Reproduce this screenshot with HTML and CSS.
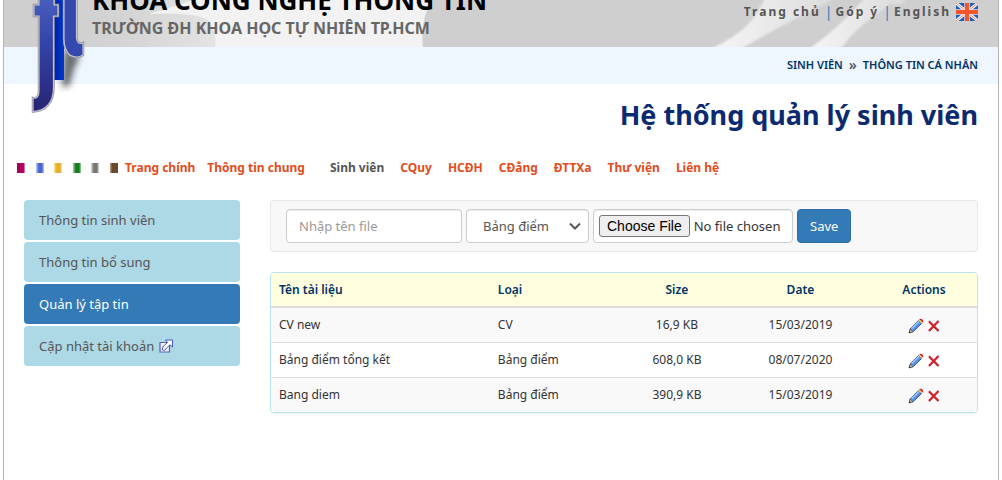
FILE: index.html
```html
<!DOCTYPE html>
<html lang="vi">
<head>
<meta charset="utf-8">
<meta name="viewport" content="width=device-width, initial-scale=1">
<title>Hệ thống quản lý sinh viên</title>
<link rel="stylesheet" href="styles.css">
</head>
<body>
<svg class="sprite" aria-hidden="true">
  <defs>
    <symbol id="icon-edit" viewBox="0 0 16 16">
      <path d="M1.5 14.5 2.3 10.8 10.6 2.3 13.7 5.3 5.2 13.6Z" fill="#5b93ee" stroke="#2c4c94"/>
      <path d="M3.6 10.6 11 3.2" stroke="#a9cbfb" stroke-width="1.4"/>
      <path d="M10.4 2.4 11.8 1.2 14.8 4.2 13.6 5.6Z" fill="#f6d35e"/>
      <path d="M11.8 1.1Q14.8.8 14.9 4.2Z" fill="#e01b1b" stroke="#e01b1b"/>
      <path d="M1 15 2.1 11 5 13.8Z" fill="#c9b9a0" stroke="#555" stroke-width=".7"/>
      <path d="M1 15 1.5 13.2 2.9 14.5Z" fill="#222"/>
    </symbol>
    <symbol id="icon-delete" viewBox="0 0 12 12">
      <path d="M1 1.5 10.5 11M10.5 1 1 11" stroke="#a8141e" stroke-width="2"/>
      <path d="M1 1 10.5 10.5M10.5 1 1 10.5" stroke="#e3262e" stroke-width="1.2"/>
    </symbol>
  </defs>
</svg>
<div class="page">
  <header class="banner">
    <svg class="banner-art" viewBox="0 0 994 47" preserveAspectRatio="none" aria-hidden="true">
      <defs>
        <linearGradient id="glow" x1="0" x2="1"><stop offset="0" stop-color="#cfcfcf"/><stop offset=".35" stop-color="#d4d4d4"/><stop offset="1" stop-color="#e6e6e6"/></linearGradient>
        <linearGradient id="swoosh" x1="0" x2="1"><stop offset="0" stop-color="#f6f6f6"/><stop offset="1" stop-color="#dadada"/></linearGradient>
        <filter id="haze"><feGaussianBlur stdDeviation="1"/></filter>
      </defs>
      <rect width="994" height="47" fill="#cfcfcf"/>
      <path d="M60 0H230V20Q222 34 211 47H60Z" fill="url(#glow)"/>
      <path d="M190 0H424Q425 8 421 16 417 30 419 47H211Q213 30 204 20 190 12 145 14Z" fill="#f2f2f2"/>
      <g filter="url(#haze)" fill="url(#swoosh)">
        <path d="M705 50Q742 32 752 14L762-3H835Q800 14 770 30L735 50Z"/>
        <path d="M804 50Q825 35 843 17L862-3H900Q904 7 886 4L868 18Q850 30 836 50Z"/>
      </g>
    </svg>
    <div class="brand">
      <p class="brand-name">KHOA CÔNG NGHỆ THÔNG TIN</p>
      <p class="brand-school">TRƯỜNG ĐH KHOA HỌC TỰ NHIÊN TP.HCM</p>
    </div>
    <nav class="top-links" aria-label="Liên kết">
      <a href="#">Trang chủ</a><span class="bar">|</span><a href="#">Góp ý</a><span class="bar">|</span><a href="#">English</a>
      <svg class="flag" viewBox="0 0 22 18" aria-hidden="true">
        <rect width="22" height="18" fill="#1761bd"/>
        <path d="M0 0 22 18M22 0 0 18" stroke="#f3f6fb" stroke-width="3"/>
        <path d="M0 0 22 18M22 0 0 18" stroke="#f08a72" stroke-width="1"/>
        <path d="M11 0V18M0 9H22" stroke="#fbd9cf" stroke-width="5.500"/>
        <path d="M11 0V18M0 9H22" stroke="#f4572c" stroke-width="4"/>
      </svg>
    </nav>
  </header>
  <svg class="logo" viewBox="0 0 60 116" role="img" aria-label="FIT">
    <defs>
      <linearGradient id="letter" x1="0" y1="0" x2="0" y2="1"><stop offset="0" stop-color="#4a5fbd"/><stop offset=".4" stop-color="#3344a8"/><stop offset="1" stop-color="#272474"/></linearGradient>
      <linearGradient id="stem" x1="0" y1="0" x2="1" y2="0"><stop offset="0" stop-color="#001fa0"/><stop offset="1" stop-color="#0038cc"/></linearGradient>
      <filter id="soft" x="-50%" y="-50%" width="200%" height="200%"><feGaussianBlur stdDeviation="3"/></filter>
    </defs>
    <path d="M34 48 50 57Q43 68 40 85L32 88Z" fill="#222" opacity=".65" filter="url(#soft)"/>
    <rect x="23" y="-2" width="11" height="82" fill="url(#stem)"/>
    <g stroke="#8c8c94" stroke-width="2.400">
      <path d="M9-3H24V5H28V16H23.500V84Q24 99 18 105 13 111 3 111.500V98Q9 99 9 91V16H4V5H9Z" fill="url(#letter)"/>
      <path d="M34-3H46.500V38Q47 45 53 43V55Q47 59 40 55 34 50 34 39Z" fill="#3548ad"/>
    </g>
    <g stroke="#c4c4ce" stroke-width="1.200">
      <path d="M9-3H24V5H28V16H23.500V84Q24 99 18 105 13 111 3 111.500V98Q9 99 9 91V16H4V5H9Z" fill="url(#letter)"/>
      <path d="M34-3H46.500V38Q47 45 53 43V55Q47 59 40 55 34 50 34 39Z" fill="#3548ad"/>
    </g>
  </svg>
  <div class="breadcrumb"><a href="#">SINH VIÊN</a><span class="sep">»</span><a href="#">THÔNG TIN CÁ NHÂN</a></div>
  <h1 class="title">Hệ thống quản lý sinh viên</h1>
  <nav class="menu" aria-label="Trình đơn chính">
    <span class="squares" aria-hidden="true"><i class="sq plum"></i><i class="sq blue"></i><i class="sq gold"></i><i class="sq green"></i><i class="sq gray"></i><i class="sq brown"></i></span>
    <a class="first" href="#">Trang chính</a>
    <a class="wide" href="#">Thông tin chung</a>
    <a class="current" href="#">Sinh viên</a>
    <a href="#">CQuy</a>
    <a href="#">HCĐH</a>
    <a href="#">CĐẳng</a>
    <a href="#">ĐTTXa</a>
    <a href="#">Thư viện</a>
    <a href="#">Liên hệ</a>
  </nav>
  <div class="content">
    <nav class="side" aria-label="Sinh viên">
      <a href="#">Thông tin sinh viên</a>
      <a href="#">Thông tin bổ sung</a>
      <a class="active" href="#" aria-current="page">Quản lý tập tin</a>
      <a href="#">Cập nhật tài khoản
        <svg class="external" viewBox="0 0 14 14" aria-hidden="true">
          <path d="M1 3.500H10.500V13H1Z" fill="#eef1fc" stroke="#5961b0" stroke-width="1.200"/>
          <path d="M3 10.500 4.500 7 8.500 3.500 6.500 1H13.500V8L11 5.800 7.500 9 5.500 11.500Z" fill="#fff" stroke="#4a55b8"/>
        </svg>
      </a>
    </nav>
    <main class="main">
      <form class="upload">
        <input class="field name" type="text" placeholder="Nhập tên file" aria-label="Nhập tên file">
        <div class="kind-box">
          <select class="field kind" aria-label="Loại"><option>Bảng điểm</option><option>CV</option></select>
          <svg class="chevron" viewBox="0 0 12 8" aria-hidden="true"><path d="M1 1.500 6 6.500 11 1.500" fill="none" stroke="#555" stroke-width="2"/></svg>
        </div>
        <input class="field file" type="file" aria-label="Tập tin">
        <button class="save" type="button">Save</button>
      </form>
      <div class="panel">
        <table class="files">
          <colgroup><col class="c-name"><col class="c-kind"><col class="c-size"><col class="c-date"><col class="c-act"></colgroup>
          <thead><tr><th>Tên tài liệu</th><th>Loại</th><th class="mid">Size</th><th class="mid">Date</th><th class="mid">Actions</th></tr></thead>
          <tbody>
            <tr><td>CV new</td><td>CV</td><td class="mid">16,9 KB</td><td class="mid">15/03/2019</td><td><div class="actions"><button type="button" aria-label="Sửa"><svg class="edit"><use href="#icon-edit"/></svg></button><button type="button" aria-label="Xóa"><svg class="delete"><use href="#icon-delete"/></svg></button></div></td></tr>
            <tr><td>Bảng điểm tổng kết</td><td>Bảng điểm</td><td class="mid">608,0 KB</td><td class="mid">08/07/2020</td><td><div class="actions"><button type="button" aria-label="Sửa"><svg class="edit"><use href="#icon-edit"/></svg></button><button type="button" aria-label="Xóa"><svg class="delete"><use href="#icon-delete"/></svg></button></div></td></tr>
            <tr><td>Bang diem</td><td>Bảng điểm</td><td class="mid">390,9 KB</td><td class="mid">15/03/2019</td><td><div class="actions"><button type="button" aria-label="Sửa"><svg class="edit"><use href="#icon-edit"/></svg></button><button type="button" aria-label="Xóa"><svg class="delete"><use href="#icon-delete"/></svg></button></div></td></tr>
          </tbody>
        </table>
      </div>
    </main>
  </div>
</div>
</body>
</html>
```
FILE: styles.css
```css
* { box-sizing: border-box; }
body { margin: 0; background: #fff; color: #333; font-family: "Noto Sans", "Open Sans", sans-serif; font-size: 13px; line-height: 20px; }
a { color: inherit; text-decoration: none; }
.sprite { position: absolute; width: 0; height: 0; }

.page { position: relative; min-height: 100vh; margin: 0 3px; border: solid #b5b5b5; border-width: 0 1px; }

.banner { position: relative; display: flex; align-items: flex-end; justify-content: space-between; height: 47px; padding: 0 20px 0 88px; overflow: hidden; }
.banner-art { position: absolute; inset: 0; width: 100%; height: 100%; }
.brand { position: relative; padding-bottom: 9px; white-space: nowrap; }
.brand p { margin: 0; font-weight: 700; }
.brand-name { color: #000; font-size: 26px; line-height: 36px; }
.brand-school { color: #666; font-size: 16px; line-height: 20px; }
.top-links { position: relative; display: flex; align-items: center; padding-bottom: 25px; color: #555; font-size: 12px; font-weight: 700; letter-spacing: 2px; }
.bar { padding: 0 1px 0 4px; color: #337ab7; font-size: 14px; font-weight: 400; }
.flag { width: 22px; height: 18px; margin-left: 5px; }

.logo { position: absolute; z-index: 1; top: 0; left: 26px; width: 60px; height: 116px; }

.breadcrumb { display: flex; justify-content: flex-end; padding: 0 20px 1px; background: #eef6ff; color: #003366; font-size: 11px; font-weight: 600; line-height: 36px; }
.sep { padding: 0 6px; color: #555; font-size: 14px; }
.title { margin: 0; padding: 11px 20px 0; color: #0b2a70; font-size: 27px; font-weight: 700; line-height: 40px; text-align: right; }

.menu { display: flex; align-items: center; gap: 16px; margin-top: 23px; padding-left: 13px; color: #e34c1c; font-size: 12px; font-weight: 700; white-space: nowrap; }
.menu .first { margin: 0 -4px 0 -9px; }
.menu .wide { margin-right: 9px; }
.menu .current { color: #555; }
.squares { display: flex; justify-content: space-between; width: 101px; }
.sq { width: 8px; height: 10px; }
.plum { background: linear-gradient(90deg, #b00058 80%, #e2a6c5); }
.blue { background: linear-gradient(90deg, #c3cdf3, #4a66d6 35% 75%, #c3cdf3); }
.gold { background: linear-gradient(90deg, #f4deb0, #e6b02a 35% 75%, #f4deb0); }
.green { background: linear-gradient(90deg, #a9d2ac, #118018 35% 75%, #a9d2ac); }
.gray { background: linear-gradient(90deg, #ddd, #777 35% 75%, #ddd); }
.brown { background: linear-gradient(90deg, #b8a18c, #68492d 30%); }

.content { display: grid; grid-template-columns: 216px minmax(0, 1fr); gap: 30px; padding: 22px 20px 0; }
.side { display: flex; flex-direction: column; gap: 2px; color: #555; }
.side a { display: flex; align-items: center; gap: 5px; padding: 10px 15px; border-radius: 4px; background: #add8e6; }
.side .active { background: #337ab7; color: #fff; }
.external { width: 14px; height: 14px; }

.upload { display: flex; gap: 4px; padding: 8px 15px; border: 1px solid #e7e7e7; border-radius: 4px; background: #f8f8f8; }
.field { height: 34px; border: 1px solid #ccc; border-radius: 4px; background-color: #fff; color: #555; font: inherit; box-shadow: inset 0 1px 1px rgba(0, 0, 0, .075); }
.name { width: 176px; padding: 6px 12px; }
.name::placeholder { color: #999; opacity: 1; }
.kind-box { position: relative; }
.kind { width: 123px; padding: 6px 16px; appearance: none; }
.chevron { position: absolute; top: 13px; right: 8px; width: 12px; height: 8px; pointer-events: none; }
.file { width: 200px; padding: 5px; color: #333; }
.file::file-selector-button { height: 22px; margin-right: 4px; padding: 0 7px; border: 1px solid #767676; border-radius: 3px; background: #efefef; color: #000; font: 14px "Liberation Sans", Arial, sans-serif; }
.save { height: 34px; padding: 0 12px; border: 1px solid #2e6da4; border-radius: 4px; background: #337ab7; color: #fff; font: inherit; }

.panel { margin-top: 20px; border: 1px solid #b5e5ef; border-radius: 4px; overflow: hidden; box-shadow: 0 1px 1px rgba(0, 0, 0, .05); }
.files { width: 100%; border-collapse: separate; border-spacing: 0; table-layout: fixed; font-size: 12px; line-height: 18px; }
.c-name { width: 31%; }
.c-kind { width: 19%; }
.c-size { width: 15%; }
.c-date { width: 20%; }
.c-act { width: 15%; }
.files th, .files td { padding: 8px; text-align: left; }
.files th { padding-bottom: 7px; border-bottom: 2px solid #ddd; background: #ffffdf; color: #003366; font-weight: 600; }
.files td { border-top: 1px solid #ddd; }
.files tr:first-child td { border-top: 0; }
.files tbody tr:nth-child(odd) { background: #f9f9f9; }
.files .mid { text-align: center; }
.actions { display: flex; align-items: flex-end; justify-content: center; gap: 4px; height: 18px; }
.actions button { display: flex; align-items: center; height: 16px; padding: 0; border: 0; background: none; }
.edit { width: 16px; height: 16px; }
.delete { width: 12px; height: 12px; }
```
